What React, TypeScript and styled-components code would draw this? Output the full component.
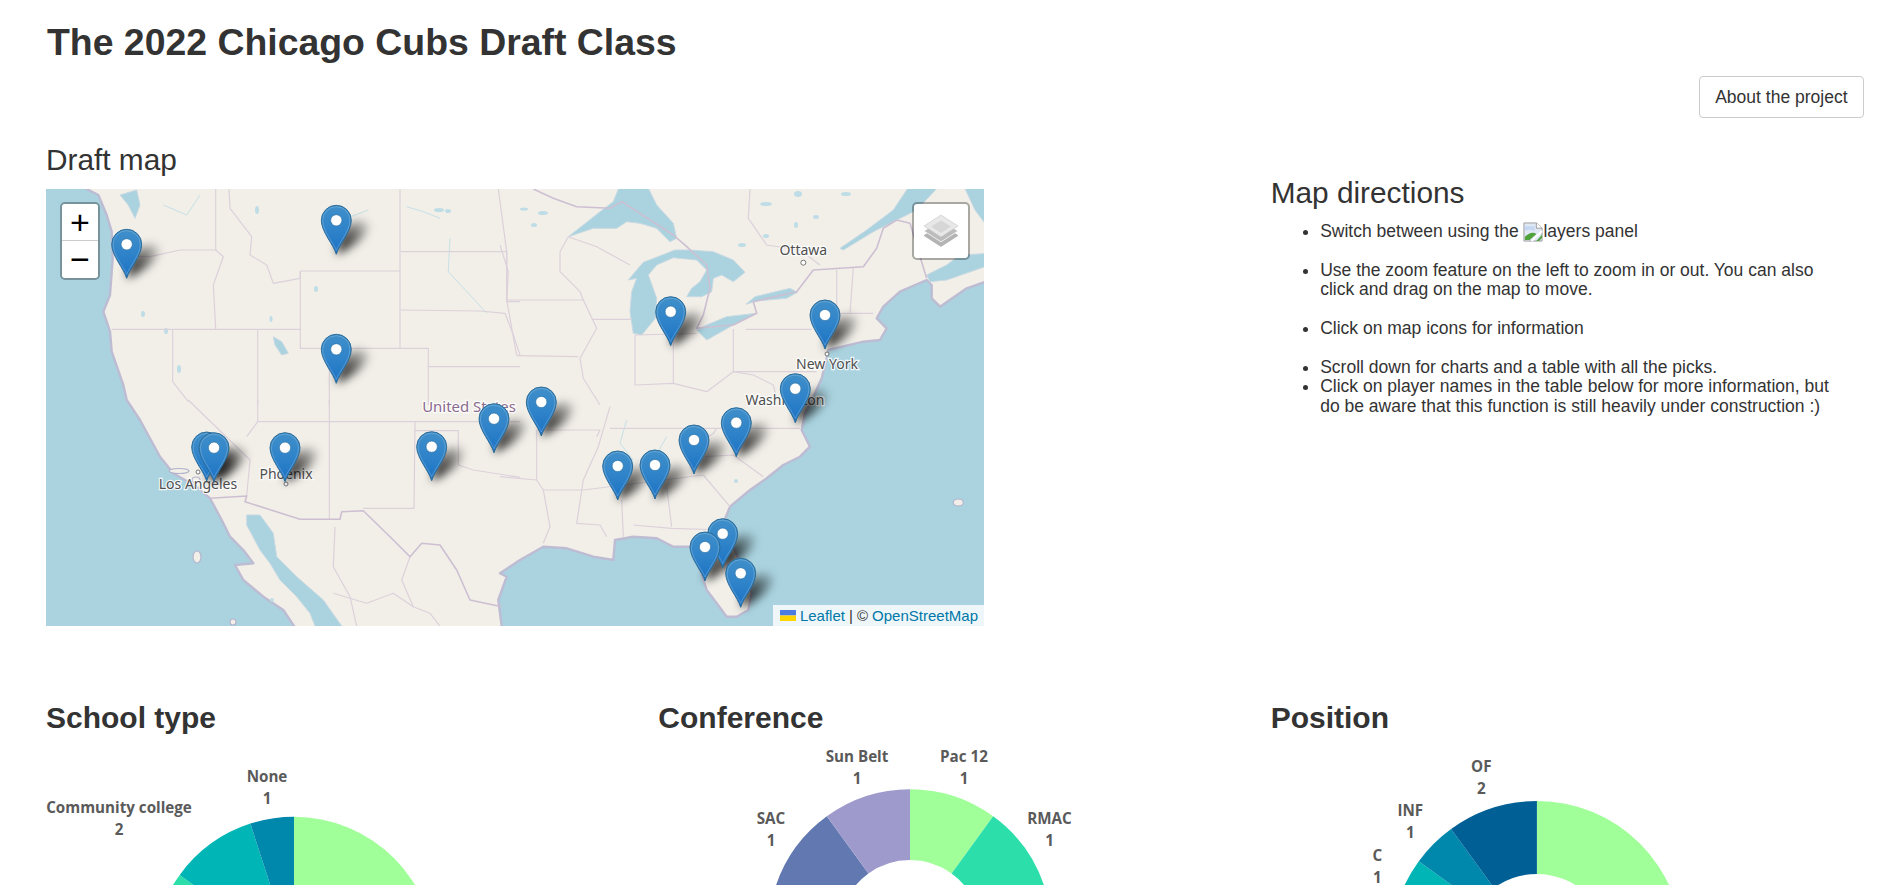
import React from "react";
import styled, { createGlobalStyle } from "styled-components";

const GlobalStyle = createGlobalStyle`
  html, body { margin: 0; padding: 0; height: 100%; overflow: hidden; background: #fff; }
  body { font-family: "Liberation Sans", Arial, sans-serif; color: #333; }
  * { box-sizing: border-box; }
`;

const Page = styled.div`
  height: 885px;
  overflow: hidden;
  padding: 0 19px 0 31px;
`;
const Title = styled.h1`
  margin: 0;
  padding: 22px 15px 0 16px;
  font-size: 37.4px;
  line-height: 40px;
  font-weight: 700;
  color: #333;
`;
const TopBar = styled.div`
  display: flex;
  justify-content: flex-end;
  margin-top: 14px;
  padding-right: 4px;
`;
const AboutButton = styled.button`
  height: 42px;
  padding: 0 15.5px;
  border: 1px solid #ccc;
  border-radius: 4px;
  background: #fff;
  color: #333;
  font: 17.5px "Liberation Sans", Arial, sans-serif;
`;
const MainGrid = styled.div`
  display: grid;
  grid-template-columns: 2fr 1fr;
  margin-top: 26px;
`;
const Column = styled.section`
  padding: 0 15px;
  min-width: 0;
`;
const DirectionsColumn = styled(Column)`
  padding-top: 33px;
`;
const SectionHeading = styled.h3`
  margin: 0 0 13px;
  font-size: 29.8px;
  line-height: 32px;
  font-weight: 400;
  color: #333;
`;
const DirectionsHeading = styled(SectionHeading)`
  margin-bottom: 12.7px;
`;
const MapFrame = styled.div`
  position: relative;
  width: 938px;
  height: 437px;
  overflow: hidden;
  background: #aad3df;
`;
const MapArt = styled.svg`
  display: block;
`;
const Land = styled.polygon`
  fill: #f2efe9;
  stroke: #bdbcd3;
  stroke-width: 2.4;
  stroke-linejoin: round;
`;
const Water = styled.polygon`
  fill: #aad3df;
  stroke: #c8d9e2;
  stroke-width: 1;
  stroke-linejoin: round;
`;
const StateLine = styled.polyline`
  fill: none;
  stroke: #dcd1da;
  stroke-width: 1.2;
  stroke-linejoin: round;
`;
const NationLine = styled.polyline`
  fill: none;
  stroke: #cdbfd2;
  stroke-width: 1.6;
  stroke-linejoin: round;
`;
const River = styled.polyline`
  fill: none;
  stroke: #c6e0e6;
  stroke-width: 1;
`;
const Islet = styled.ellipse`
  fill: #f2efe9;
  stroke: #b4b3cd;
  stroke-width: 1.2;
`;
const Puddle = styled.ellipse`
  fill: #bedde6;
`;
const CityDot = styled.circle`
  fill: #fff;
  stroke: #777;
  stroke-width: 1;
`;
const PlaceLabel = styled.text`
  font-family: "Noto Sans", "DejaVu Sans", sans-serif;
  font-size: ${(p) => p.$size || 14}px;
  fill: ${(p) => p.$color || "#4f4f4f"};
  text-anchor: middle;
  stroke: rgba(255, 255, 255, 0.85);
  stroke-width: 2.4px;
  paint-order: stroke;
`;
const ZoomBar = styled.div`
  position: absolute;
  left: 14px;
  top: 13px;
  width: 40px;
  border: 2px solid rgba(0, 0, 0, 0.3);
  border-radius: 5px;
  background-clip: padding-box;
`;
const ZoomButton = styled.div`
  height: 37px;
  background: #fff;
  color: #000;
  font: 400 34px/36px "Liberation Sans", Arial, sans-serif;
  text-align: center;
  border-bottom: ${(p) => (p.$divider ? "1px solid #ccc" : "none")};
  border-radius: ${(p) => (p.$divider ? "3px 3px 0 0" : "0 0 3px 3px")};
`;
const LayersButton = styled.div`
  position: absolute;
  right: 14px;
  top: 13px;
  width: 58px;
  height: 58px;
  display: flex;
  align-items: center;
  justify-content: center;
  background: #fff;
  background-clip: padding-box;
  border: 2px solid rgba(0, 0, 0, 0.3);
  border-radius: 5px;
`;
const Attribution = styled.div`
  position: absolute;
  right: 0;
  bottom: 0;
  height: 21px;
  padding: 0 6px 0 7px;
  display: flex;
  align-items: center;
  gap: 4px;
  background: rgba(255, 255, 255, 0.8);
  color: #333;
  font-size: 15px;
  white-space: nowrap;
`;
const AttributionLink = styled.span`
  color: #0078a8;
`;
const FlagArt = styled.svg`
  display: block;
`;
const DirectionList = styled.ul`
  margin: 0;
  padding: 0 9px 0 49.5px;
  font-size: 17.5px;
  line-height: 19.4px;
`;
const DirectionItem = styled.li`
  margin-bottom: ${(p) => (p.$spaced ? "19.4px" : "0")};
`;
const BrokenImage = styled.svg`
  display: inline-block;
  width: 20px;
  height: 20px;
  vertical-align: -5px;
`;
const ChartGrid = styled.div`
  display: grid;
  grid-template-columns: repeat(3, 1fr);
  margin-top: 76px;
`;
const ChartHeading = styled.h3`
  margin: 0 0 11px;
  font-size: 30px;
  line-height: 32px;
  font-weight: 700;
  color: #333;
`;
const ChartArt = styled.svg`
  display: block;
  overflow: visible;
`;
const ChartLabel = styled.text`
  font-family: "Open Sans", "Noto Sans", sans-serif;
  font-size: 15.2px;
  font-weight: 700;
  fill: #5a5a5a;
  text-anchor: middle;
`;

const convert = (ox: number, oy: number) => (s: string) =>
  s
    .trim()
    .split(/\s+/)
    .map((pair) => {
      const [x, y] = pair.split(",").map(Number);
      return `${(ox + x / 3).toFixed(1)},${(oy + y / 3).toFixed(1)}`;
    })
    .join(" ");
const Z6 = convert(-6, -4);
const Z7 = convert(454, -4);
const Z8 = convert(-6, 211);
const Z9 = convert(454, 211);

const landPoints = [
  "38,-6 945,-6 945,91",
  Z7("1400,310 1320,365 1295,340 1295,300 1280,285 1200,320 1150,365 1130,400 1160,430 1140,465 1090,470 985,495 980,520 965,580 945,625"),
  Z9("915,40 905,90 930,140 900,170 850,195 800,235 750,270 690,320 670,370 700,440 730,510 755,580 745,630 710,650 680,650 650,610 620,570 600,510 575,440 520,440 470,415 400,410 345,420 340,480 280,470 200,445 130,440 60,480 0,520"),
  Z8("1400,530 1375,600 1385,678"),
  "455,440 250,440",
  Z8("730,630 670,590 610,540 585,495 640,490 610,450 570,410 545,360 510,295 470,260 400,220 360,170 300,60 260,0"),
  Z6("250,600 215,500 210,440 190,380 210,330 218,220 215,140 200,90 175,30 140,12"),
].join(" ");

const waters = [
  Z8("620,345 660,345 700,400 710,470 770,530 850,600 905,678 905,700 825,700 825,678 810,640 770,590 720,540 690,490 660,450 620,375"),
  Z7("205,155 250,120 300,80 340,50 360,0 440,0 470,60 520,115 530,160 510,170 470,130 420,115 380,110 350,130 280,130"),
  Z7("430,232 500,205 525,195 570,195 640,200 700,225 735,262 700,290 665,270 640,280 635,320 605,335 560,335 575,310 600,290 620,255 590,225 520,218 470,240 445,270 470,340 466,400 425,450 400,445 390,380 395,320 410,280 385,285"),
  Z7("590,435 620,465 700,420 770,385 680,395 620,420"),
  Z7("738,358 765,335 870,310 892,322 860,340 770,348"),
  Z7("1020,190 1100,135 1180,75 1230,0 1320,0 1250,75 1190,105 1120,140 1030,195"),
  Z7("1390,0 1470,0 1470,135 1425,75"),
  Z7("1470,205 1380,210 1340,240 1280,270 1290,290 1340,285 1470,240"),
  Z6("240,30 290,15 300,60 285,100 265,60"),
  Z6("700,455 725,470 745,505 725,510 705,480"),
];

const nationLines = [
  Z7("100,12 160,40 230,65 330,70 365,50 520,150 560,185 620,240 630,310 610,390 590,430 700,420 770,385 760,350 890,320 940,255 1090,245 1130,190 1150,130 1190,105 1230,115 1260,215 1280,280"),
  Z8("510,295 620,288 615,305 780,358 900,358 905,335 970,332 1050,410 1110,470 1145,430 1200,435 1250,510 1290,600 1385,620"),
];

const stateLines = [
  Z6("220,212 330,215 420,195 530,195"),
  Z6("527,12 527,195 550,215 520,300 527,433"),
  Z6("567,12 570,70 635,155 630,210 680,240 700,295 780,280 781,258"),
  Z6("781,258 1080,258"),
  Z6("1080,12 1080,490"),
  Z6("1082,200 1400,200"),
  Z6("1082,375 1320,378 1395,385 1420,450 1440,510"),
  Z6("1375,12 1400,200 1400,350 1440,350"),
  Z6("781,258 781,490 1165,490 1165,660"),
  Z6("868,490 868,660"),
  Z6("1165,545 1440,545"),
  Z6("215,433 780,433"),
  Z6("398,433 398,590 445,650"),
  Z6("653,433 653,660"),
  Z8("445,0 620,170 630,180 620,288"),
  Z8("620,110 653,65 1440,65"),
  Z8("653,0 653,65"),
  Z8("868,0 868,358"),
  Z8("1125,65 1122,325 970,325"),
  Z8("1125,92 1255,92 1255,195 1300,210 1440,232"),
  Z7("180,200 180,260 240,320 250,345"),
  Z7("20,345 250,345 290,430 240,520 250,580 300,660"),
  Z7("50,512 235,515"),
  Z7("20,200 20,345 50,512"),
  Z7("205,155 290,185 390,240"),
  Z7("275,403 395,403"),
  Z7("405,450 405,600 520,595 620,620 700,560 700,432"),
  Z7("520,450 520,595"),
  Z7("405,450 590,445"),
  Z7("702,560 950,560"),
  Z7("737,433 935,433"),
  Z7("1010,255 1010,385"),
  Z7("1060,250 1050,385"),
  Z7("1005,385 1120,385"),
  Z7("700,560 760,570 820,600 830,640"),
  Z9("110,90 300,90 290,110"),
  Z9("330,85 650,85 900,85"),
  Z9("550,165 640,100 650,85"),
  Z9("615,170 700,165 790,230"),
  Z9("610,225 690,320"),
  Z9("500,260 515,380"),
  Z9("400,375 515,385 680,390"),
  Z9("365,300 370,410"),
  Z9("250,270 610,225"),
  Z9("130,270 250,270"),
  Z9("110,90 110,240 130,270 150,380 130,430"),
  Z9("330,20 295,140 250,240 230,370 300,375 320,410"),
  Z9("0,230 110,240"),
  Z7("0,180 25,260 20,345"),
  Z7("180,200 205,155"),
  Z8("885,380 880,500 930,590 950,678"),
  Z8("1110,470 1085,540 1120,620 1170,640 1200,678"),
  Z8("880,580 980,610 1060,580 1120,620"),
  Z7("750,12 745,100 800,180 900,195 960,240"),
];

const rivers = [
  Z6("1100,65 1150,80 1200,100"),
  Z6("1230,160 1225,260 1290,330 1340,385"),
  Z6("920,100 985,75"),
  Z6("370,60 440,90 480,30"),
  Z9("380,60 360,130 400,180"),
  Z9("500,110 460,180"),
];

const puddles: [number, number, number, number][] = [
  [478, 20, 4, 1.5], [497, 24, 5, 2], [488, 36, 3, 2], [211, 21, 2, 4], [393, 21, 5, 2], [402, 22, 3, 2],
  [696, 56, 4, 2], [720, 15, 6, 2], [752, 5, 4, 3], [800, 5, 5, 2], [750, 36, 2, 3], [770, 28, 3, 2],
  [720, 47, 3, 2], [97, 125, 2, 3], [120, 142, 2, 3], [133, 180, 2, 4], [225, 130, 1.5, 3], [270, 100, 2, 3],
  [702, 385, 2, 4], [690, 292, 2, 2], [226, 411, 2, 2],
];

const islets: [number, number, number, number][] = [
  [912.3, 313.5, 5, 3.5], [151, 368, 4, 6], [187, 433, 3, 3], [133, 282, 10, 2.5], [150, 291, 4, 3],
];

const pins: [number, number][] = [
  [80.7, 89.3], [290.3, 65.3], [290.3, 194.3], [624.7, 156.7], [779, 160], [749.3, 233.7],
  [690.3, 267.7], [648, 285], [609, 310], [571.7, 311], [495.3, 247], [448, 263.7], [385.7, 291.7],
  [239, 292.7], [160.7, 292], [168, 292.7], [676.7, 378.7], [659, 392], [694.7, 418.3],
];

const PIN = "M0 0C-2.6-9.5-15-22.5-15-34A15 15 0 1 1 15-34C15-22.5 2.6-9.5 0 0Z";

function MapDrawing() {
  return (
    <MapArt width={938} height={437} viewBox="0 0 938 437">
      <defs>
        <linearGradient id="pinFill" x1="0" y1="0" x2="0" y2="1">
          <stop offset="0" stopColor="#3f8fc9" />
          <stop offset="0.5" stopColor="#2f83c9" />
          <stop offset="1" stopColor="#1b72c4" />
        </linearGradient>
        <linearGradient id="shadowFill" x1="0" y1="1" x2="1" y2="0">
          <stop offset="0" stopColor="#000" stopOpacity=".95" />
          <stop offset="0.55" stopColor="#000" stopOpacity=".55" />
          <stop offset="1" stopColor="#000" stopOpacity=".08" />
        </linearGradient>
        <filter id="pinBlur" x="-60%" y="-60%" width="220%" height="220%">
          <feGaussianBlur stdDeviation="4.6" />
        </filter>
        <symbol id="pinShape" overflow="visible">
          <path d={PIN} fill="url(#pinFill)" stroke="#2b6c99" strokeWidth="1" />
          <path d="M0-4C-3-12-13.6-23-13.6-34A13.6 13.6 0 1 1 13.6-34C13.6-23 3-12 0-4Z" fill="none" stroke="rgba(255,255,255,.2)" strokeWidth="1" />
          <circle cx="0" cy="-34" r="5.6" fill="#fff" stroke="#2a6d9e" strokeWidth=".6" />
        </symbol>
        <symbol id="pinShadow" overflow="visible">
          <path d="M0 0L4-20C12-34 26-37 32-31C34-20 16-6 0 0Z" fill="url(#shadowFill)" filter="url(#pinBlur)" />
        </symbol>
      </defs>
      <Land points={landPoints} />
      {waters.map((w, i) => (
        <Water key={i} points={w} />
      ))}
      {puddles.map(([cx, cy, rx, ry], i) => (
        <Puddle key={i} cx={cx} cy={cy} rx={rx} ry={ry} />
      ))}
      {rivers.map((r, i) => (
        <River key={i} points={r} />
      ))}
      {stateLines.map((l, i) => (
        <StateLine key={i} points={l} />
      ))}
      {nationLines.map((l, i) => (
        <NationLine key={i} points={l} />
      ))}
      {islets.map(([cx, cy, rx, ry], i) => (
        <Islet key={i} cx={cx} cy={cy} rx={rx} ry={ry} />
      ))}
      <CityDot cx={757.3} cy={73.7} r={2.5} />
      <CityDot cx={781} cy={165} r={2} />
      <CityDot cx={152} cy={283} r={2} />
      <CityDot cx={240} cy={295} r={2} />
      <PlaceLabel x={757.3} y={66}>Ottawa</PlaceLabel>
      <PlaceLabel x={781} y={180}>New York</PlaceLabel>
      <PlaceLabel x={739} y={216}>Washington</PlaceLabel>
      <PlaceLabel x={152} y={300}>Los Angeles</PlaceLabel>
      <PlaceLabel x={240} y={290}>Phoenix</PlaceLabel>
      <PlaceLabel x={423} y={223} $size={14.9} $color="#8a6a8e">United States</PlaceLabel>
      {pins.map(([x, y], i) => (
        <use key={i} href="#pinShadow" x={x} y={y} />
      ))}
      {pins.map(([x, y], i) => (
        <use key={i} href="#pinShape" x={x} y={y} />
      ))}
    </MapArt>
  );
}

function LayersGlyph() {
  return (
    <svg width="34" height="32" viewBox="0 0 34 32">
      <path d="M0 20.5L17 10L34 20.5L17 31.5Z" fill="#b4b4b4" stroke="#a6a6a6" strokeWidth=".6" />
      <path d="M0 16L17 5.5L34 16L17 26.8Z" fill="#bcbcbc" stroke="#f5f5f5" strokeWidth=".9" />
      <path d="M0 11L17 0L34 11L17 22Z" fill="#e8e8e8" stroke="#c4c4c4" strokeWidth=".6" />
      <path d="M7 11.5L17 5.5L27 11.5L17 18Z" fill="#d6d6d6" />
    </svg>
  );
}

function BrokenGlyph() {
  return (
    <BrokenImage viewBox="0 0 21 20">
      <path d="M1 .5H14L20 6V19.5H1Z" fill="#dfe7f5" stroke="#9a9a9a" />
      <path d="M14 .5V6H20" fill="#fff" stroke="#9a9a9a" />
      <path d="M2 4H12V9L9 8C6 7 4 9 2 8Z" fill="#c4d6f2" />
      <path d="M2 18.5V15C7 10 11 10 14 12L7 18.5Z" fill="#4fa33a" />
      <path d="M14 19.5L20 13V16L17 19.5Z" fill="#4fa33a" />
      <path d="M9 19.5L20 9" stroke="#fff" strokeWidth="2" />
    </BrokenImage>
  );
}

type Slice = { from: number; to: number; color: string };

const rad = (a: number) => (a * Math.PI) / 180;
function wedgePath(cx: number, cy: number, r0: number, r1: number, a0: number, a1: number) {
  const pt = (r: number, a: number) => `${(cx + r * Math.sin(rad(a))).toFixed(2)} ${(cy - r * Math.cos(rad(a))).toFixed(2)}`;
  const large = a1 - a0 > 180 ? 1 : 0;
  return `M${pt(r1, a0)}A${r1} ${r1} 0 ${large} 1 ${pt(r1, a1)}L${pt(r0, a1)}A${r0} ${r0} 0 ${large} 0 ${pt(r0, a0)}Z`;
}

const GREEN = "#a0ff98";
const TEAL = "#2cdfaa";
const CYAN = "#00b5b5";
const OCEAN = "#0088ac";
const NAVY = "#005f94";

const charts: {
  title: string;
  cx: number;
  cy: number;
  r: number;
  slices: Slice[];
  labels: { x: number; y: number; name: string; value: string }[];
}[] = [
  {
    title: "School type",
    cx: 248,
    cy: 213,
    r: 141.3,
    slices: [
      { from: 0, to: 270, color: GREEN },
      { from: 270, to: 306, color: TEAL },
      { from: 306, to: 342, color: CYAN },
      { from: 342, to: 360, color: OCEAN },
    ],
    labels: [
      { x: 221, y: 37, name: "None", value: "1" },
      { x: 73, y: 68, name: "Community college", value: "2" },
    ],
  },
  {
    title: "Conference",
    cx: 252,
    cy: 185.8,
    r: 141.5,
    slices: [
      { from: 0, to: 36, color: GREEN },
      { from: 36, to: 72, color: TEAL },
      { from: 72, to: 288, color: OCEAN },
      { from: 288, to: 324, color: "#6278b0" },
      { from: 324, to: 360, color: "#9e9acc" },
    ],
    labels: [
      { x: 199, y: 17, name: "Sun Belt", value: "1" },
      { x: 306, y: 17, name: "Pac 12", value: "1" },
      { x: 113, y: 79, name: "SAC", value: "1" },
      { x: 391.5, y: 79, name: "RMAC", value: "1" },
    ],
  },
  {
    title: "Position",
    cx: 265.9,
    cy: 202,
    r: 146,
    slices: [
      { from: 0, to: 270, color: GREEN },
      { from: 270, to: 306, color: CYAN },
      { from: 306, to: 324, color: OCEAN },
      { from: 324, to: 360, color: NAVY },
    ],
    labels: [
      { x: 210.3, y: 27, name: "OF", value: "2" },
      { x: 139.3, y: 71, name: "INF", value: "1" },
      { x: 106.3, y: 116, name: "C", value: "1" },
    ],
  },
];

export default function App() {
  return (
    <Page>
      <GlobalStyle />
      <Title>The 2022 Chicago Cubs Draft Class</Title>
      <TopBar>
        <AboutButton>About the project</AboutButton>
      </TopBar>
      <MainGrid>
        <Column>
          <SectionHeading>Draft map</SectionHeading>
          <MapFrame>
            <MapDrawing />
            <ZoomBar>
              <ZoomButton $divider>+</ZoomButton>
              <ZoomButton>−</ZoomButton>
            </ZoomBar>
            <LayersButton>
              <LayersGlyph />
            </LayersButton>
            <Attribution>
              <FlagArt width="16" height="11" viewBox="0 0 16 11">
                <rect width="16" height="5.5" fill="#4c7be1" />
                <rect y="5.5" width="16" height="5.5" fill="#ffd500" />
              </FlagArt>
              <AttributionLink>Leaflet</AttributionLink>
              <span>| ©</span>
              <AttributionLink>OpenStreetMap</AttributionLink>
            </Attribution>
          </MapFrame>
        </Column>
        <DirectionsColumn>
          <DirectionsHeading>Map directions</DirectionsHeading>
          <DirectionList>
            <DirectionItem $spaced>
              Switch between using the <BrokenGlyph />layers panel
            </DirectionItem>
            <DirectionItem $spaced>
              Use the zoom feature on the left to zoom in or out. You can also click and drag on the map to move.
            </DirectionItem>
            <DirectionItem $spaced>Click on map icons for information</DirectionItem>
            <DirectionItem>Scroll down for charts and a table with all the picks.</DirectionItem>
            <DirectionItem>
              Click on player names in the table below for more information, but do be aware that this function is still heavily under construction :)
            </DirectionItem>
          </DirectionList>
        </DirectionsColumn>
      </MainGrid>
      <ChartGrid>
        {charts.map((c) => (
          <Column key={c.title}>
            <ChartHeading>{c.title}</ChartHeading>
            <ChartArt width="580" height="360" viewBox="0 0 580 360">
              {c.slices.map((s) => (
                <path key={s.from} d={wedgePath(c.cx, c.cy, c.r * 0.5, c.r, s.from, s.to)} fill={s.color} />
              ))}
              {c.labels.map((l) => (
                <ChartLabel key={l.name} x={l.x} y={l.y}>
                  <tspan x={l.x}>{l.name}</tspan>
                  <tspan x={l.x} dy="21.6">{l.value}</tspan>
                </ChartLabel>
              ))}
            </ChartArt>
          </Column>
        ))}
      </ChartGrid>
    </Page>
  );
}
